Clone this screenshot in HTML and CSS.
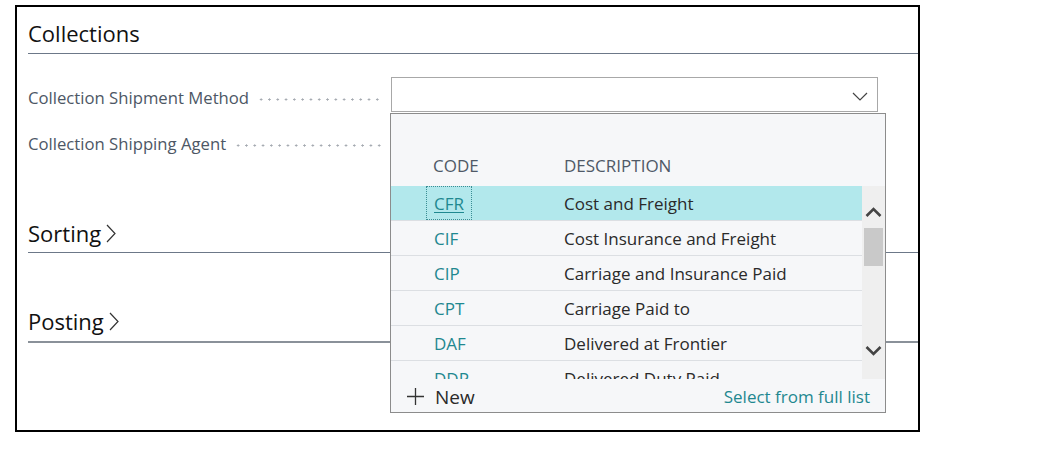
FILE: index.html
```html
<!DOCTYPE html>
<html lang="en">
<head>
<meta charset="utf-8">
<title>Collections</title>
<link rel="stylesheet" href="styles.css">
</head>
<body>
<div class="frame">
  <section class="group">
    <h2 class="group-title">Collections</h2>
    <div class="fields">
      <div class="field">
        <div class="label"><span class="label-text">Collection Shipment Method</span><i class="leader"></i></div>
        <div class="control">
          <div class="select">
            <svg class="select-chev" width="16" height="9" viewBox="0 0 16 9"><path d="M1 1 L8 8 L15 1" fill="none" stroke="#444" stroke-width="1.2"/></svg>
          </div>
          <div class="dropdown">
            <div class="dd-head">
              <span class="h-code">CODE</span>
              <span class="h-desc">DESCRIPTION</span>
            </div>
            <div class="dd-body">
              <div class="dd-rows">
                <div class="row selected"><span class="code"><span class="code-link focus">CFR</span></span><span class="desc">Cost and Freight</span></div>
                <div class="row"><span class="code"><span class="code-link">CIF</span></span><span class="desc">Cost Insurance and Freight</span></div>
                <div class="row"><span class="code"><span class="code-link">CIP</span></span><span class="desc">Carriage and Insurance Paid</span></div>
                <div class="row"><span class="code"><span class="code-link">CPT</span></span><span class="desc">Carriage Paid to</span></div>
                <div class="row"><span class="code"><span class="code-link">DAF</span></span><span class="desc">Delivered at Frontier</span></div>
                <div class="row"><span class="code"><span class="code-link">DDP</span></span><span class="desc">Delivered Duty Paid</span></div>
              </div>
              <div class="scrollbar">
                <svg class="sb-btn" width="23" height="24" viewBox="0 0 23 24"><path d="M4.5 16 L11.5 9 L18.5 16" fill="none" stroke="#444" stroke-width="2.6"/></svg>
                <div class="sb-thumb"></div>
                <div class="sb-space"></div>
                <svg class="sb-btn" width="23" height="24" viewBox="0 0 23 24"><path d="M4.5 8 L11.5 15 L18.5 8" fill="none" stroke="#444" stroke-width="2.6"/></svg>
              </div>
            </div>
            <div class="dd-foot">
              <span class="new">
                <svg width="17" height="17" viewBox="0 0 17 17"><path d="M8.5 0 V17 M0 8.5 H17" stroke="#333" stroke-width="1.3"/></svg>
                <span>New</span>
              </span>
              <span class="full-list">Select from full list</span>
            </div>
          </div>
        </div>
      </div>
      <div class="field">
        <div class="label"><span class="label-text">Collection Shipping Agent</span><i class="leader"></i></div>
        <div class="control"></div>
      </div>
    </div>
  </section>
  <section class="group group-sorting">
    <h2 class="group-title collapsed">Sorting<svg class="caret" width="12" height="19" viewBox="0 0 12 19"><path d="M2 1 L10 9.5 L2 18" fill="none" stroke="#333" stroke-width="1.2"/></svg></h2>
  </section>
  <section class="group group-posting">
    <h2 class="group-title collapsed">Posting<svg class="caret" width="12" height="19" viewBox="0 0 12 19"><path d="M2 1 L10 9.5 L2 18" fill="none" stroke="#333" stroke-width="1.2"/></svg></h2>
  </section>
</div>
</body>
</html>
```
FILE: styles.css
```css
html, body {
  margin: 0;
  background: #ffffff;
}
body {
  font-family: "Open Sans", "Noto Sans", sans-serif;
  color: #222;
}
.frame {
  margin: 5px 0 0 15px;
  width: 905px;
  height: 427px;
  box-sizing: border-box;
  border: 2px solid #000;
  padding-left: 11px;
}
.group-title {
  margin: 0;
  font-size: 22px;
  font-weight: 500;
  line-height: 28px;
  color: #111;
  padding: 12px 0 6px;
  border-bottom: 1px solid #6c7888;
  display: flex;
  align-items: center;
}
.group-title.collapsed {
  padding: 0 0 5px;
}
.group-sorting {
  margin-top: 61px;
}
.group-posting {
  margin-top: 54px;
}
.group-posting .group-title {
  padding-bottom: 6px;
  border-bottom: 2px solid #8a9199;
}
.caret {
  margin-left: 4px;
  margin-top: 1px;
}
.fields {
  margin-top: 23px;
  display: flex;
  flex-direction: column;
  gap: 11px;
}
.field {
  display: flex;
  height: 35px;
}
.label {
  flex: 0 0 363px;
  display: flex;
  align-items: flex-start;
  padding-top: 9px;
  box-sizing: border-box;
}
.label-text {
  font-size: 16.7px;
  line-height: 24px;
  color: #4d5765;
  white-space: nowrap;
}
.leader {
  flex: 1;
  height: 3px;
  margin: 12px 8px 0 8px;
  background-image: radial-gradient(circle, #a4a9b0 0.9px, transparent 1.3px);
  background-size: 8.3px 3px;
  background-position: 0 0;
}
.control {
  position: relative;
  width: 487px;
}
.select {
  height: 35px;
  box-sizing: border-box;
  border: 1px solid #a8a8a8;
  display: flex;
  align-items: center;
  justify-content: flex-end;
  padding-right: 9px;
  background: #fff;
}
.select-chev {
  margin-top: 3px;
}
.dropdown {
  position: absolute;
  z-index: 5;
  top: 36px;
  left: -1px;
  width: 496px;
  height: 300px;
  box-sizing: border-box;
  border: 1px solid #8c8c8c;
  background: #f6f7f9;
  display: flex;
  flex-direction: column;
}
.dd-head {
  height: 72px;
  box-sizing: border-box;
  padding: 40px 0 0 42px;
  display: flex;
  font-size: 17px;
  line-height: 24px;
  color: #4f5967;
}
.h-code {
  width: 131px;
}
.dd-body {
  height: 193px;
  display: flex;
  overflow: hidden;
}
.dd-rows {
  flex: 1;
  overflow: hidden;
}
.row {
  height: 35px;
  box-sizing: border-box;
  border-bottom: 1px solid #dcdfe3;
  display: flex;
  padding-left: 35px;
  font-size: 17px;
  line-height: 35px;
}
.row.selected {
  background: #b2e8ec;
}
.code {
  width: 138px;
  flex: 0 0 138px;
}
.code-link {
  display: inline-block;
  height: 34px;
  line-height: 34px;
  box-sizing: border-box;
  padding: 0 7px;
  border: 1px dotted transparent;
  color: #1f8890;
}
.code-link.focus {
  border-color: #3a8d94;
  text-decoration: underline;
  text-underline-offset: 2px;
}
.desc {
  color: #2a2a2a;
}
.scrollbar {
  width: 23px;
  flex: 0 0 23px;
  background: #efefef;
  display: flex;
  flex-direction: column;
  padding: 14px 0 16px;
  box-sizing: border-box;
}
.sb-btn {
  display: block;
  flex: 0 0 24px;
}
.sb-thumb {
  margin: 4px 2px 0 2px;
  height: 38px;
  background: #c9c9c9;
}
.sb-space {
  flex: 1;
}
.dd-foot {
  flex: 1;
  display: flex;
  align-items: center;
  justify-content: space-between;
  padding: 2px 15px 0 16px;
  font-size: 17px;
}
.new {
  display: flex;
  align-items: center;
  gap: 11px;
  color: #2a2a2a;
  font-size: 19px;
}
.full-list {
  color: #1f8890;
}
```
